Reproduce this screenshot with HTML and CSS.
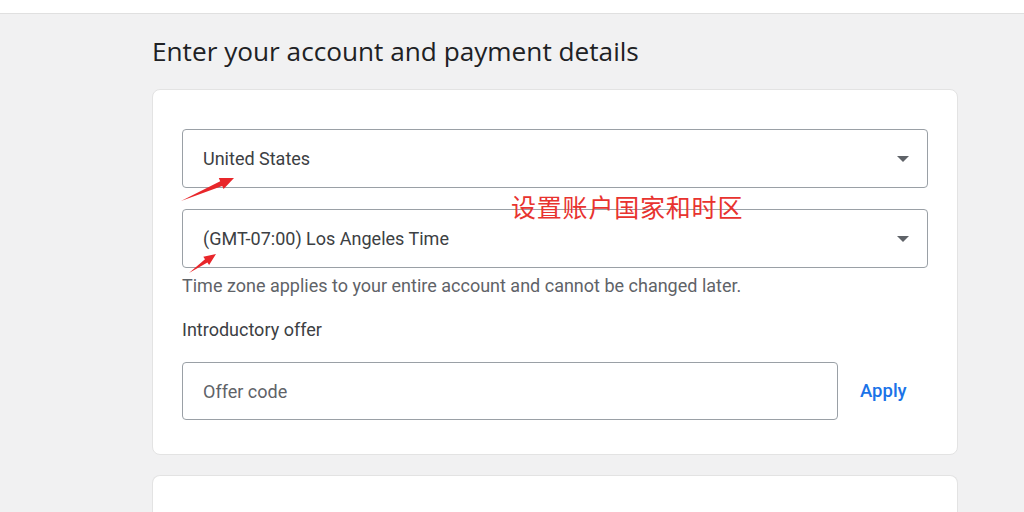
FILE: index.html
```html
<!DOCTYPE html>
<html lang="en">
<head>
<meta charset="utf-8">
<title>Account and payment details</title>
<link rel="stylesheet" href="styles.css">
</head>
<body>
<div class="topbar"></div>
<main class="main">
  <h1 class="title">Enter your account and payment details</h1>
  <section class="card">
    <div class="select">
      <span class="select-value">United States</span>
      <span class="caret"></span>
    </div>
    <div class="select select-tz">
      <span class="select-value">(GMT-07:00) Los Angeles Time</span>
      <span class="caret"></span>
    </div>
    <p class="helper">Time zone applies to your entire account and cannot be changed later.</p>
    <p class="label">Introductory offer</p>
    <div class="offer-row">
      <div class="input"><span class="placeholder">Offer code</span></div>
      <span class="apply">Apply</span>
    </div>
  </section>
  <section class="card card-next"></section>
</main>
<div class="note">设置账户国家和时区</div>
<svg class="arrows" width="1024" height="512" viewBox="0 0 1024 512">
  <polygon points="181,201 222.2,185.9 223.6,189.1 234,178 218.8,178.1 220.2,181.3" fill="#e8262a"/>
  <polygon points="189,273 207.4,262.5 209.1,265 216,254 203.3,256.8 205,259.3" fill="#e8262a"/>
</svg>
</body>
</html>
```

FILE: styles.css
```css
html, body {
  margin: 0;
  padding: 0;
}
body {
  background: #f1f1f2;
  font-family: Roboto, "Liberation Sans", sans-serif;
  color: #3c4043;
  width: 1024px;
  height: 512px;
  overflow: hidden;
  position: relative;
}
.topbar {
  height: 13px;
  background: #ffffff;
  border-bottom: 1px solid #e0e0e0;
}
.main {
  padding-left: 152px;
  width: 806px;
}
.title {
  margin: 0;
  padding-top: 21px;
  font-family: "Open Sans", Roboto, sans-serif;
  font-weight: 400;
  font-size: 26.2px;
  line-height: 32px;
  color: #202124;
}
.card {
  margin-top: 22px;
  background: #ffffff;
  border: 1px solid #e3e3e3;
  border-radius: 8px;
  padding: 39px 29px 34px 29px;
  display: flex;
  flex-direction: column;
}
.card-next {
  margin-top: 20px;
  height: 36px;
  padding: 0;
  border-bottom: none;
  border-radius: 8px 8px 0 0;
}
.select {
  height: 57px;
  border: 1px solid #9aa0a6;
  border-radius: 4px;
  display: flex;
  align-items: center;
  justify-content: space-between;
  padding: 0 18px 0 20px;
}
.select-tz {
  margin-top: 21px;
}
.select-value {
  font-size: 18px;
  line-height: 22px;
  color: #3c4043;
}
.caret {
  width: 0;
  height: 0;
  border-left: 6px solid transparent;
  border-right: 6px solid transparent;
  border-top: 6px solid #5f6368;
}
.helper {
  margin: 7px 0 0;
  font-size: 18px;
  line-height: 21px;
  color: #5f6368;
}
.label {
  margin: 23px 0 0;
  font-size: 18px;
  line-height: 21px;
  color: #3c4043;
}
.offer-row {
  margin-top: 22px;
  display: flex;
  align-items: center;
}
.input {
  width: 634px;
  height: 56px;
  border: 1px solid #9aa0a6;
  border-radius: 4px;
  display: flex;
  align-items: center;
  padding-left: 20px;
}
.placeholder {
  font-size: 18px;
  color: #5f6368;
}
.apply {
  margin-left: 22px;
  font-size: 18.5px;
  font-weight: 500;
  color: #1a73e8;
}
.note {
  position: absolute;
  left: 511px;
  top: 193px;
  font-family: "Noto Sans CJK SC", sans-serif;
  font-size: 25px;
  line-height: 26px;
  color: #e8332f;
  letter-spacing: 0.8px;
}
.arrows {
  position: absolute;
  left: 0;
  top: 0;
  pointer-events: none;
}
```
